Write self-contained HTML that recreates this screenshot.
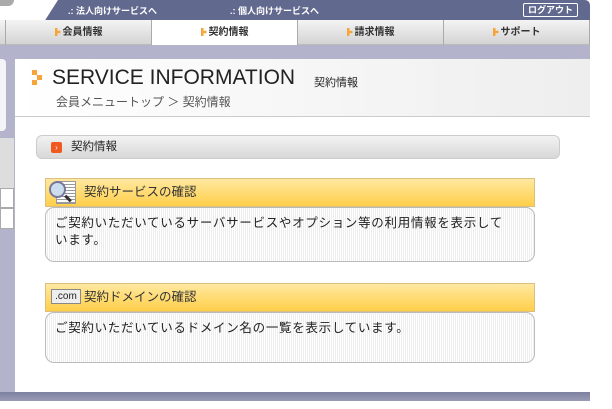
<!DOCTYPE html>
<html><head><meta charset="utf-8"><style>
*{margin:0;padding:0;box-sizing:border-box}
body{width:612px;height:409px;background:#fff;position:relative;overflow:hidden;font-family:"Liberation Sans","Noto Sans CJK JP",sans-serif;color:#222}
.a{position:absolute}
.top{left:40px;top:0;width:550px;height:20px;background:#62698f;border-radius:0 5px 0 0}
.tl{left:0;top:0;width:58px;height:20px;background:#fff;clip-path:polygon(0 0,100% 0,78% 100%,0 100%)}
.tl2{left:-10px;top:-6px;width:24px;height:12px;background:#aaa;border-radius:6px}
.tx{color:#fff;font-size:9px;top:4px;font-weight:bold}
.lo{left:523px;top:3px;width:55px;height:14px;border:1px solid #fff;border-radius:2px;color:#fff;font-size:9px;font-weight:bold;text-align:center;line-height:12px}
.nav{left:0;top:20px;width:590px;height:25px;background:linear-gradient(#f4f4f4,#d4d4d4);border-bottom:1px solid #bbb}
.tab{top:20px;height:25px;font-size:10px;font-weight:bold;color:#333;line-height:25px;text-align:center;border-left:1px solid #aaa}
.tab i{display:inline-block;width:6px;height:8px;background:#f7a53a;margin-right:2px;vertical-align:-1px;clip-path:polygon(0 0,50% 0,50% 35%,100% 35%,100% 65%,50% 65%,50% 100%,0 100%)}
.band{left:0;top:45px;width:590px;height:14px;background:#b3b3cc}
.side{left:0;top:45px;width:15px;height:350px;background:#b3b3cc}
.bot{left:0;top:392px;width:590px;height:9px;background:linear-gradient(#7d809f,#9a9cb6)}
.hd{left:15px;top:59px;width:575px;height:58px;background:linear-gradient(90deg,#fff,#eee);border-bottom:1px solid #ccc}
.sec{left:36px;top:135px;width:524px;height:24px;border-radius:6px;background:linear-gradient(#f2f2f2,#d8d8d8);border:1px solid #ccc;font-size:11.5px;line-height:22px;padding-left:34px}
.yb{left:45px;width:490px;height:29px;background:linear-gradient(#ffe8a0,#ffcf4a);border:1px solid #d9c080;font-size:12.5px;line-height:27px;color:#333}
.bx{left:45px;width:490px;border:1px solid #bbb;border-radius:9px;background:repeating-linear-gradient(90deg,#fff 0,#fff 1px,#eee 1px,#eee 2px);font-size:12.5px;letter-spacing:0.7px;line-height:17px;padding:7px 9px;white-space:nowrap}
</style></head><body>
<div class="a top"></div>
<div class="a tl"></div><div class="a tl2"></div>
<div class="a tx" style="left:68px">.: 法人向けサービスへ</div>
<div class="a tx" style="left:230px">.: 個人向けサービスへ</div>
<div class="a lo">ログアウト</div>
<div class="a nav"></div>
<div class="a tab" style="left:5px;width:146px"><i></i>会員情報</div>
<div class="a tab" style="left:151px;width:146px;background:#fff"><i></i>契約情報</div>
<div class="a tab" style="left:297px;width:146px"><i></i>請求情報</div>
<div class="a tab" style="left:443px;width:147px;border-right:1px solid #aaa"><i></i>サポート</div>
<div class="a band"></div>
<div class="a side"></div>
<div class="a" style="left:0;top:59px;width:6px;height:72px;background:#f4f4f8;border-radius:0 4px 4px 0"></div>
<div class="a" style="left:0;top:138px;width:14px;height:50px;background:#ddd"></div>
<div class="a" style="left:0;top:188px;width:14px;height:20px;background:#fff;border:1px solid #aaa"></div>
<div class="a" style="left:0;top:208px;width:14px;height:21px;background:#fff;border:1px solid #aaa"></div>
<div class="a bot"></div>
<div class="a hd"></div>
<div class="a" style="left:32px;top:70px;width:5px;height:5px;background:#f7a53a"></div>
<div class="a" style="left:37px;top:75px;width:5px;height:5px;background:#f7a53a"></div>
<div class="a" style="left:32px;top:80px;width:5px;height:5px;background:#f7a53a"></div>
<div class="a" style="left:52px;top:66px;font-size:21px;color:#222">SERVICE INFORMATION</div>
<div class="a" style="left:314px;top:74px;font-size:11px">契約情報</div>
<div class="a" style="left:56px;top:93px;font-size:12px;color:#555">会員メニュートップ ＞ 契約情報</div>
<div class="a sec">契約情報</div>
<div class="a" style="left:51px;top:142px;width:11px;height:11px;background:#f05a1e;border-radius:2px;color:#fff;font-size:8px;line-height:11px;text-align:center">›</div>
<div class="a yb" style="top:178px;padding-left:38px">契約サービスの確認</div>
<div class="a" style="left:56px;top:181px;width:20px;height:23px;background:#fff;border:1px solid #999;background:repeating-linear-gradient(#fff 0,#fff 2px,#999 2px,#999 3px)"></div>
<div class="a" style="left:49px;top:181px;width:17px;height:17px;border-radius:50%;background:#cde;border:2px solid #779"></div>
<div class="a" style="left:64px;top:197px;width:8px;height:3px;background:#333;transform:rotate(45deg)"></div>
<div class="a bx" style="top:207px;height:55px">ご契約いただいているサーバサービスやオプション等の利用情報を表示して<br>います。</div>
<div class="a yb" style="top:283px;padding-left:38px">契約ドメインの確認</div>
<div class="a" style="left:51px;top:289px;width:30px;height:15px;background:#eee;border:1px solid #888;font-size:10px;line-height:13px;text-align:center">.com</div>
<div class="a bx" style="top:312px;height:51px">ご契約いただいているドメイン名の一覧を表示しています。</div>
</body></html>
